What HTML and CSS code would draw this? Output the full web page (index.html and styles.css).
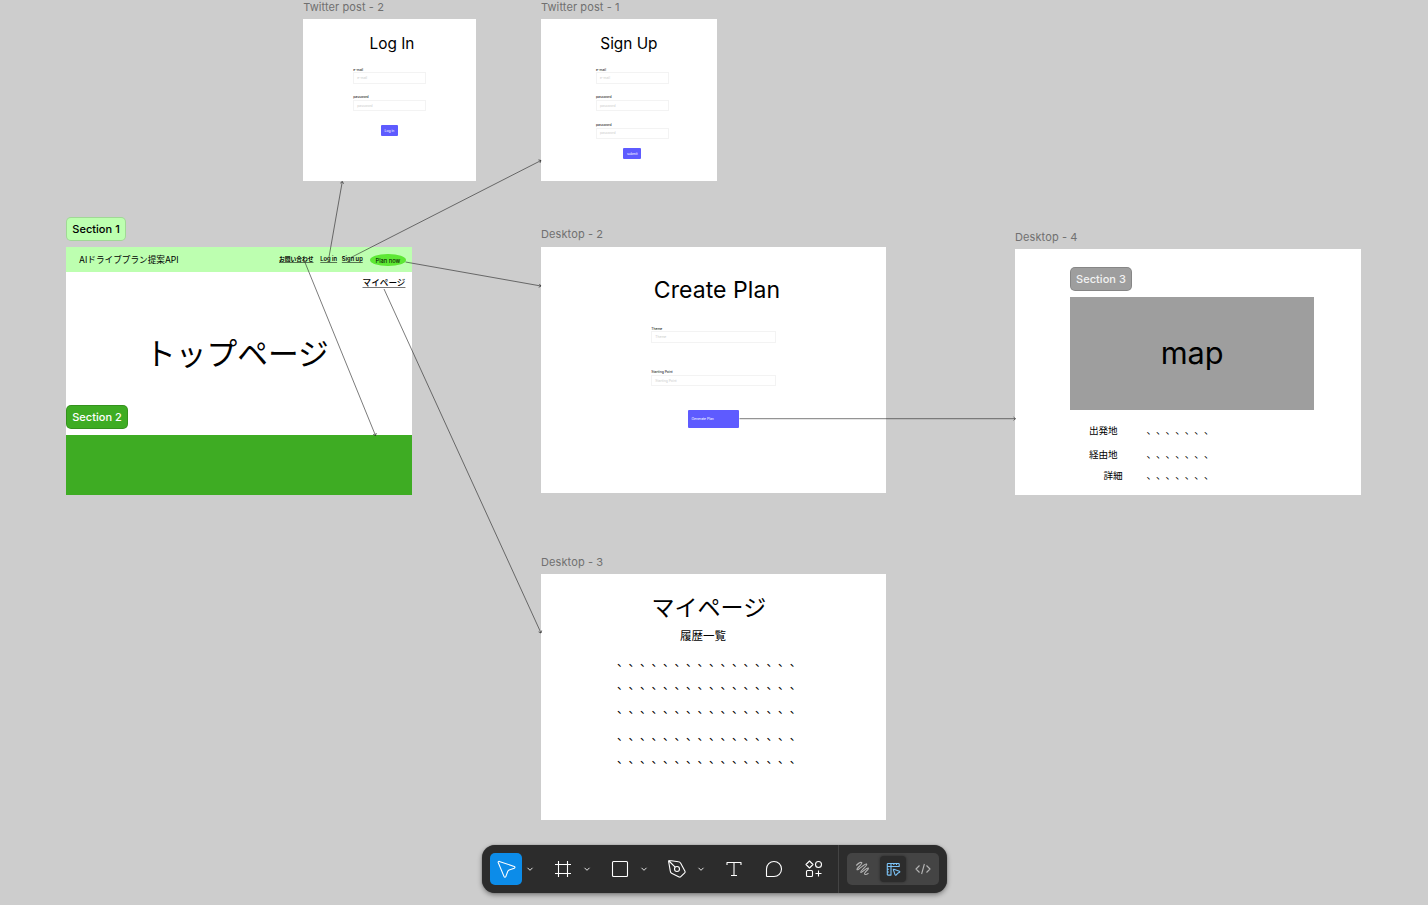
FILE: index.html
```html
<!DOCTYPE html>
<html lang="ja">
<head>
<meta charset="utf-8">
<title>Canvas</title>
<link rel="stylesheet" href="styles.css">
</head>
<body>
<main class="canvas">
  <div class="frame-label label-login">Twitter post - 2</div>
  <section class="frame frame-login">
    <h2 class="text title-login">Log In</h2>
    <div class="form form-login">
      <div class="field"><span class="field-name">e-mail</span><span class="input">e-mail</span></div>
      <div class="field"><span class="field-name">password</span><span class="input">password</span></div>
      <span class="button">Log in</span>
    </div>
  </section>

  <div class="frame-label label-signup">Twitter post - 1</div>
  <section class="frame frame-signup">
    <h2 class="text title-signup">Sign Up</h2>
    <div class="form form-signup">
      <div class="field"><span class="field-name">e-mail</span><span class="input">e-mail</span></div>
      <div class="field"><span class="field-name">password</span><span class="input">password</span></div>
      <div class="field"><span class="field-name">password</span><span class="input">password</span></div>
      <span class="button">submit</span>
    </div>
  </section>

  <section class="frame frame-top">
    <div class="top-header"></div>
    <span class="text brand">AIドライブプラン提案API</span>
    <span class="text nav nav-contact">お問い合わせ</span>
    <span class="text nav nav-login">Log in</span>
    <span class="text nav nav-signup">Sign up</span>
    <span class="plan-pill">Plan now</span>
    <span class="text nav-mypage">マイページ</span>
    <h1 class="text title-top">トップページ</h1>
    <div class="top-footer"></div>
  </section>
  <div class="badge badge-one">Section 1</div>
  <div class="badge badge-two">Section 2</div>

  <div class="frame-label label-plan">Desktop - 2</div>
  <section class="frame frame-plan">
    <h2 class="text title-plan">Create Plan</h2>
    <div class="form form-plan">
      <div class="field"><span class="field-name">Theme</span><span class="input">Theme</span></div>
      <div class="field"><span class="field-name">Starting Point</span><span class="input">Starting Point</span></div>
      <span class="button">Generate Plan</span>
    </div>
  </section>

  <div class="frame-label label-mypage">Desktop - 3</div>
  <section class="frame frame-mypage">
    <h2 class="text title-mypage">マイページ</h2>
    <span class="text history">履歴一覧</span>
    <span class="text dots dots-1">、、、、、、、、、、、、、、、、</span>
    <span class="text dots dots-2">、、、、、、、、、、、、、、、、</span>
    <span class="text dots dots-3">、、、、、、、、、、、、、、、、</span>
    <span class="text dots dots-4">、、、、、、、、、、、、、、、、</span>
    <span class="text dots dots-5">、、、、、、、、、、、、、、、、</span>
  </section>

  <div class="frame-label label-map">Desktop - 4</div>
  <section class="frame frame-map">
    <div class="badge badge-three">Section 3</div>
    <div class="map"><span class="map-text">map</span></div>
    <span class="text stop stop-start">出発地</span>
    <span class="text stop value-start">、、、、、、、</span>
    <span class="text stop stop-via">経由地</span>
    <span class="text stop value-via">、、、、、、、</span>
    <span class="text stop stop-detail">詳細</span>
    <span class="text stop value-detail">、、、、、、、</span>
  </section>

  <svg class="connectors" viewBox="0 0 1428 905">
    <defs>
      <marker id="tip" viewBox="0 0 4 6" refX="3.5" refY="3" markerWidth="4" markerHeight="6" markerUnits="userSpaceOnUse" orient="auto">
        <path d="M1.500 1.300L3.500 3L1.500 4.700"/>
      </marker>
    </defs>
    <path d="M329 257L342.300 181.500" marker-end="url(#tip)"/>
    <path d="M351 257.500L541 160.500" marker-end="url(#tip)"/>
    <path d="M405.500 262L541 286" marker-end="url(#tip)"/>
    <path d="M304 260L375.500 435.500" marker-end="url(#tip)"/>
    <path d="M384 289L541 633" marker-end="url(#tip)"/>
    <path d="M739.500 418.700H1015.500" marker-end="url(#tip)"/>
  </svg>
</main>

<nav class="toolbar">
  <div class="tools">
    <span class="tool active"><svg viewBox="0 0 24 24"><path d="M5.300 4.400L20.200 9.400c1 .4 1 1.400.1 1.800l-5.200 1.700c-.7.300-1 .6-1.300 1.300l-2 5.400c-.4.900-1.400.9-1.700 0L4.200 5.500c-.2-.7.400-1.300 1.100-1.100Z"/></svg></span>
    <svg class="chevron" viewBox="0 0 8 8"><path d="M1.500 2.800L4 5.300L6.500 2.800"/></svg>
    <span class="tool"><svg viewBox="0 0 24 24"><path d="M7.500 4v16M16.500 4v16M4 7.500h16M4 16.500h16"/></svg></span>
    <svg class="chevron" viewBox="0 0 8 8"><path d="M1.500 2.800L4 5.300L6.500 2.800"/></svg>
    <span class="tool"><svg viewBox="0 0 24 24"><rect x="4.500" y="4.500" width="15" height="15" rx="1"/></svg></span>
    <svg class="chevron" viewBox="0 0 8 8"><path d="M1.500 2.800L4 5.300L6.500 2.800"/></svg>
    <span class="tool"><svg viewBox="0 0 24 24"><path d="M4.500 3.500L13.500 4.700c1 .1 1.700.7 2.200 1.500l4.300 8.100c.3.600.2 1.200-.3 1.600l-3.900 3.800c-.5.500-1.100.6-1.700.2L6.600 16.200c-.8-.5-1.200-1.200-1.300-2.100L3.600 4.300c-.1-.5.400-.9.900-.8ZM4 4l6.200 6.200"/><circle cx="12" cy="12" r="2.500"/></svg></span>
    <svg class="chevron" viewBox="0 0 8 8"><path d="M1.500 2.800L4 5.300L6.500 2.800"/></svg>
    <span class="tool tool-text"><svg viewBox="0 0 24 24"><path d="M5 8V5.500h14V8M12 5.500v13M9 18.500h6"/></svg></span>
    <span class="tool tool-comment"><svg viewBox="0 0 24 24"><path d="M12 4.500a7.500 7.500 0 1 1 0 15H5a.5.500 0 0 1-.5-.5v-7A7.500 7.500 0 0 1 12 4.500Z"/></svg></span>
    <span class="tool"><svg viewBox="0 0 24 24"><path d="M7.500 4L11 7.500L7.500 11L4 7.500Z"/><circle cx="16.500" cy="7.500" r="3"/><rect x="4.500" y="13.500" width="6" height="6" rx="1"/><path d="M16.500 13.500v6M13.500 16.500h6"/></svg></span>
  </div>
  <div class="modes">
    <div class="switch">
      <span class="mode"><svg viewBox="0 0 24 24"><path d="M5.300 8.500C7.500 6.200 10 5 10.800 5.700C12 7 5.200 11.200 6 12.600C7 13.900 14 5.800 15.600 7C17 8.300 8.800 14 9.800 15.300C11 16.500 16 9.800 17.300 11C18.400 12.200 12.500 15.800 13.600 17.200C14.300 17.900 16 17.200 17.500 16.200"/></svg></span>
      <span class="mode mode-on"><svg viewBox="0 0 24 24"><path d="M7 6.500h10.500a.7.700 0 0 1 .7.700v2.300H10v8.600H7a.7.700 0 0 1-.7-.7V7.200a.7.700 0 0 1 .7-.7ZM10 6.500v3H6.500M12.800 6.700v1.300M15.500 6.700v1.300M6.500 12.300h1.400M6.500 15h1.400M12.900 12.300l5.500 1.900c.5.200.5.700.1 1l-1.800 1.100-1.600 1.700c-.4.400-.9.300-1.100-.3l-1.600-4.800c-.1-.4.100-.7.500-.6Z"/></svg></span>
      <span class="mode"><svg viewBox="0 0 24 24"><path d="M8.500 8.500L5 12l3.500 3.500M15.500 8.500L19 12l-3.500 3.500M13.400 7L10.600 17"/></svg></span>
    </div>
  </div>
</nav>
</body>
</html>
```

FILE: styles.css
```css
* { box-sizing: border-box; }
body {
  margin: 0;
  width: 1428px;
  height: 905px;
  overflow: hidden;
  background: #cdcdcd;
  color: #000;
  font-family: Inter, "Noto Sans CJK JP", sans-serif;
  text-spacing-trim: space-all;
}
.canvas { position: relative; width: 1428px; height: 905px; }

/* Frames placed on the free canvas */
.frame { position: absolute; background: #fff; }
.frame-login { left: 303.4px; top: 19.4px; width: 172.200px; height: 162px; }
.frame-signup { left: 541px; top: 19.4px; width: 176px; height: 162px; }
.frame-top { left: 66px; top: 247.4px; width: 345.700px; height: 248px; }
.frame-plan { left: 541px; top: 247px; width: 345.400px; height: 246px; }
.frame-mypage { left: 541px; top: 574.400px; width: 345.400px; height: 246px; }
.frame-map { left: 1015.400px; top: 249.400px; width: 345.600px; height: 246px; }

.frame-label {
  position: absolute;
  font-size: 11px;
  line-height: 14px;
  letter-spacing: .1px;
  color: #707070;
  white-space: nowrap;
}
.label-login { left: 303.200px; top: 0; }
.label-signup { left: 541px; top: 0; }
.label-plan { left: 541px; top: 227px; }
.label-mypage { left: 541px; top: 555px; }
.label-map { left: 1015px; top: 230px; }

.text { position: absolute; margin: 0; font-weight: 400; line-height: 1; white-space: nowrap; }
.title-login { left: 66.200px; top: 16.500px; font-size: 15.360px; font-weight: 390; }
.title-signup { left: 59.300px; top: 16.500px; font-size: 15.360px; font-weight: 390; }
.title-plan { left: 112.800px; top: 32px; font-size: 23.040px; font-weight: 385; letter-spacing: .05px; }
.title-top { left: 79px; top: 91.300px; font-size: 30.720px; }
.title-mypage { left: 110.500px; top: 22.600px; font-size: 23.040px; }
.history { left: 139px; top: 56.400px; font-size: 11.520px; }
.brand { left: 13px; top: 9px; font-size: 8.640px; }
.nav { top: 8.600px; font-size: 5.760px; font-weight: 600; text-decoration: underline; text-decoration-thickness: .5px; text-decoration-color: #0008; }
.nav-contact { left: 213px; }
.nav-login { left: 254.300px; }
.nav-signup { left: 275.800px; }
.nav-mypage { left: 296.500px; top: 32px; font-size: 8.640px; font-weight: 500; text-decoration: underline; text-decoration-thickness: .5px; text-decoration-color: #0008; }
.plan-pill {
  position: absolute;
  left: 303.600px;
  top: 6.600px;
  width: 36.500px;
  height: 12.500px;
  border-radius: 50%;
  background: #5de834;
  font-size: 5.760px;
  line-height: 13.500px;
  text-align: center;
}
.top-header { height: 24.800px; background: #bdffb0; }
.top-footer { height: 60px; margin-top: 163px; background: #3eac23; }

.dots { left: 75.900px; font-size: 11.520px; }
.dots-1 { top: 82.600px; }
.dots-2 { top: 105.300px; }
.dots-3 { top: 129.400px; }
.dots-4 { top: 156.400px; }
.dots-5 { top: 179.400px; }

.map {
  position: absolute;
  left: 54.600px;
  top: 47.800px;
  width: 244.400px;
  height: 112.700px;
  display: flex;
  align-items: center;
  justify-content: center;
  padding-bottom: 2px;
  background: #9e9e9e;
  font-size: 30.720px;
  font-weight: 390;
}
.stop { font-size: 9.600px; }
.stop-start { left: 73.500px; top: 176.400px; }
.stop-via { left: 73.500px; top: 200.400px; }
.stop-detail { left: 88px; top: 221.400px; }
.value-start { left: 131px; top: 176.400px; }
.value-via { left: 131px; top: 200.400px; }
.value-detail { left: 131px; top: 221.400px; }

/* Forms */
.form { position: absolute; display: flex; flex-direction: column; font-size: 3.360px; line-height: 4px; }
.form-login { left: 49.800px; top: 48.200px; width: 72.500px; gap: 11.500px; }
.form-signup { left: 55px; top: 48.200px; width: 72.700px; gap: 11.500px; }
.form-plan { left: 110.300px; top: 79.500px; width: 124.400px; gap: 27.800px; }
.field { display: flex; flex-direction: column; }
.field-name { height: 4.800px; font-weight: 400; }
.input {
  height: 11.300px;
  padding: 3.800px 3px;
  border: 1px solid #f3f3f3;
  line-height: 3.800px;
  color: #ccc;
}
.button {
  align-self: center;
  width: 17.500px;
  height: 11.500px;
  margin-top: 2px;
  border-radius: 1px;
  background: #5e5bff;
  color: #fff;
  line-height: 12.500px;
  text-align: center;
}
.form-signup .button { width: 18.200px; margin-top: -2.600px; }
.form-plan .button {
  width: 51.400px;
  height: 17.800px;
  margin-top: -4.500px;
  padding-left: 3.700px;
  line-height: 18.800px;
  text-align: left;
}

/* Section names */
.badge {
  position: absolute;
  display: flex;
  align-items: center;
  justify-content: center;
  height: 24px;
  border: 1px solid #00000026;
  border-radius: 5px;
  font-size: 11px;
  font-weight: 500;
  letter-spacing: .03px;
}
.badge-one { left: 66px; top: 217px; width: 60px; background: #bdffb0; }
.badge-two { left: 66px; top: 405px; width: 62px; background: #3eac23; color: #fff; }
.badge-three { left: 54.600px; top: 17.600px; width: 62px; background: #9e9e9e; color: #f2f2f2; }

.connectors { position: absolute; inset: 0; width: 1428px; height: 905px; fill: none; stroke: #222; stroke-width: .6; }

/* Toolbar */
.toolbar {
  position: absolute;
  left: 482px;
  top: 845px;
  width: 465px;
  height: 48px;
  display: flex;
  border-radius: 13px;
  background: #2c2c2c;
  box-shadow: 0 0 1px #0008, 0 2px 5px #0006;
}
.tools { display: flex; align-items: center; width: 357px; padding-left: 8px; border-right: 1px solid #444; }
.tool { display: flex; align-items: center; justify-content: center; width: 32px; height: 32px; border-radius: 5px; }
.tool svg, .mode svg { width: 24px; height: 24px; fill: none; stroke: #fff; stroke-width: 1.100; stroke-linejoin: round; }
.tool.active { background: #0c8ce9; }
.chevron { width: 8px; height: 8px; margin: 0 13px 0 4px; fill: none; stroke: #e6e6e6; }
.tool-text { margin-left: -.5px; }
.tool-comment { margin: 0 8px; }
.modes { padding: 8px; }
.switch { display: flex; align-items: center; justify-content: space-between; width: 92px; height: 32px; padding: 0 3px; border-radius: 5px; background: #444; }
.mode { display: flex; align-items: center; justify-content: center; width: 26px; height: 26px; border-radius: 4px; }
.mode svg { stroke: #b5b5b5; }
.mode-on { background: #2c2c2c; box-shadow: 0 0 3px #0006; }
.mode-on svg { stroke: #7cc4f8; }
```
